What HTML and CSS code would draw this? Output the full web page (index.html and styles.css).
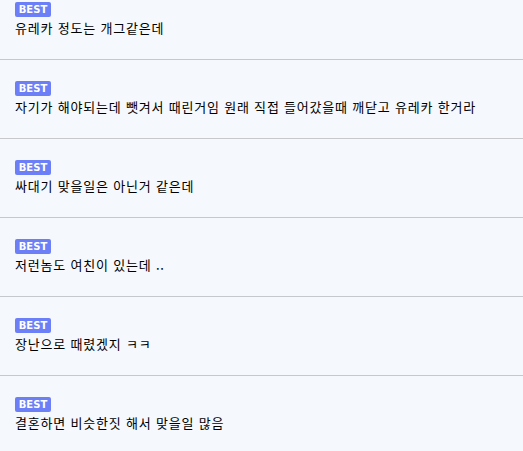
FILE: index.html
```html
<!DOCTYPE html>
<html lang="ko">
<head>
<meta charset="utf-8">
<link rel="stylesheet" href="styles.css">
</head>
<body>
<ul class="list">
  <li class="item"><span class="badge">BEST</span><p class="text">유레카 정도는 개그같은데</p></li>
  <li class="item"><span class="badge">BEST</span><p class="text">자기가 해야되는데 뺏겨서 때린거임 원래 직접 들어갔을때 깨닫고 유레카 한거라</p></li>
  <li class="item"><span class="badge">BEST</span><p class="text">싸대기 맞을일은 아닌거 같은데</p></li>
  <li class="item"><span class="badge">BEST</span><p class="text">저런놈도 여친이 있는데 ..</p></li>
  <li class="item"><span class="badge">BEST</span><p class="text">장난으로 때렸겠지 ㅋㅋ</p></li>
  <li class="item"><span class="badge">BEST</span><p class="text">결혼하면 비슷한짓 해서 맞을일 많음</p></li>
</ul>
</body>
</html>
```
FILE: styles.css
```css
html, body {
  margin: 0;
  padding: 0;
  background: #f5f8fd;
}
body {
  font-family: "Noto Sans CJK KR", "Noto Sans", sans-serif;
  color: #111;
}
.list {
  list-style: none;
  margin: -19px 0 0;
  padding: 0;
}
.item {
  height: 78px;
  box-sizing: content-box;
  padding: 0 15px;
  border-bottom: 1px solid #c6c8cc;
  display: flex;
  flex-direction: column;
  align-items: flex-start;
}
.badge {
  margin-top: 21px;
  display: flex;
  align-items: center;
  justify-content: center;
  width: 36px;
  height: 15px;
  border-radius: 2px;
  background: #6d7ff6;
  color: #fff;
  font-family: "DejaVu Sans", sans-serif;
  font-weight: bold;
  font-size: 10px;
  letter-spacing: 0;
}
.text {
  margin: 2px 0 0;
  font-size: 13px;
  line-height: 18px;
  letter-spacing: 0.8px;
  color: #000;
}
```
